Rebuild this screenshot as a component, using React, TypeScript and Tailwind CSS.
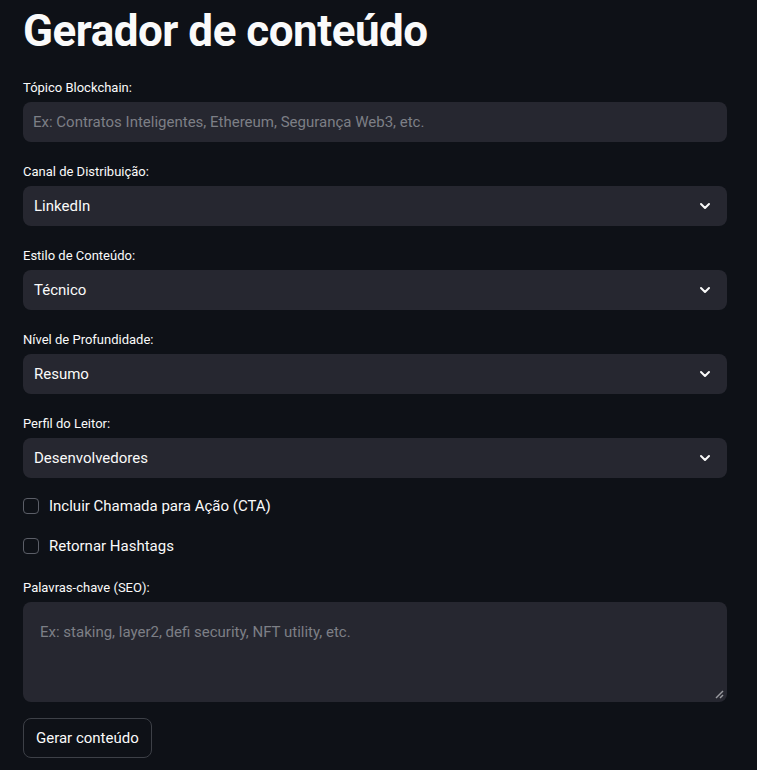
import { ChevronDown } from 'lucide-react';

const font = { fontFamily: 'Roboto, "Noto Sans", sans-serif' };

function Label({ text }: { text: string }) {
  return (
    <div className="h-7 flex items-start pt-[4px] text-[13px] leading-5 text-[#fafafa]">{text}</div>
  );
}

function Select({ label, value }: { label: string; value: string }) {
  return (
    <div>
      <Label text={label} />
      <div className="h-10 rounded-lg bg-[#262730] flex items-center justify-between pl-[11px] pr-[14px] text-[15px] text-[#fafafa]">
        <span>{value}</span>
        <ChevronDown className="w-4 h-4" strokeWidth={3} />
      </div>
    </div>
  );
}

function Check({ label }: { label: string }) {
  return (
    <div className="h-6 flex items-center gap-[10px]">
      <div className="w-4 h-4 rounded-[4px] border border-[#5b5e67] bg-[#0e1117]" />
      <span className="text-[15px] text-[#fafafa]">{label}</span>
    </div>
  );
}

export default function App() {
  return (
    <div className="min-h-[770px] bg-[#0e1117] px-[23px] pt-[4px]" style={font}>
      <h1 className="text-[44px] font-bold leading-[54px] text-[#fafafa] tracking-[-0.5px] h-[54px] mb-4">
        Gerador de conteúdo
      </h1>
      <div className="flex flex-col gap-4 w-[704px]">
        <div>
          <Label text="Tópico Blockchain:" />
          <div className="h-10 rounded-lg bg-[#262730] flex items-center pl-[10px] text-[15px] text-[#7d7f86]">
            Ex: Contratos Inteligentes, Ethereum, Segurança Web3, etc.
          </div>
        </div>
        <Select label="Canal de Distribuição:" value="LinkedIn" />
        <Select label="Estilo de Conteúdo:" value="Técnico" />
        <Select label="Nível de Profundidade:" value="Resumo" />
        <Select label="Perfil do Leitor:" value="Desenvolvedores" />
        <Check label="Incluir Chamada para Ação (CTA)" />
        <Check label="Retornar Hashtags" />
        <div>
          <Label text="Palavras-chave (SEO):" />
          <div className="relative h-[100px] rounded-lg bg-[#262730] pl-[17px] pt-[18px] text-[15px] leading-6 text-[#7d7f86]">
            Ex: staking, layer2, defi security, NFT utility, etc.
            <svg className="absolute right-[3px] bottom-[3px]" width="9" height="9" viewBox="0 0 9 9">
              <path d="M1 8 L8 1" stroke="#9a9ba0" strokeWidth="1.5" />
              <path d="M5 8 L8 5" stroke="#9a9ba0" strokeWidth="1.5" />
            </svg>
          </div>
        </div>
        <div>
          <button className="h-10 px-3 rounded-lg border border-[#3d4047] bg-[#0e1117] text-[15px] text-[#fafafa]">
            Gerar conteúdo
          </button>
        </div>
      </div>
    </div>
  );
}
